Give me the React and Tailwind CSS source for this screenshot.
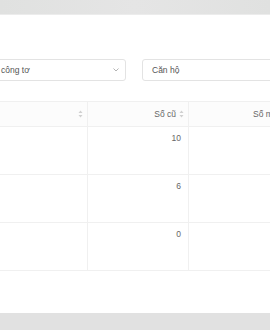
import React from "react";

function Sorter() {
  return (
    <svg width="5" height="8" viewBox="0 0 5 8" className="shrink-0">
      <path d="M2.5 0.5 L4.5 3 L0.5 3 Z" fill="#d0d0d0" />
      <path d="M2.5 7.5 L4.5 5 L0.5 5 Z" fill="#d0d0d0" />
    </svg>
  );
}

function Row({ value }) {
  return (
    <div className="flex h-[48px] border-b border-[#f0f0f0]">
      <div className="w-[128px] shrink-0 border-r border-[#f0f0f0]" />
      <div className="w-[101px] shrink-0 border-r border-[#f0f0f0] flex justify-end pr-[7px] pt-[5px] text-[8.5px] text-[#666]">
        {value}
      </div>
      <div className="flex-1" />
    </div>
  );
}

export default function App() {
  return (
    <div
      className="w-[270px] h-[330px] overflow-hidden bg-[#e1e1e1]"
      style={{ fontFamily: '"Liberation Sans", Arial, sans-serif' }}
    >
      <div className="h-[15px] bg-[linear-gradient(90deg,#e0e1e0_0%,#e5e5e5_50%,#e0e1e0_100%)] border-b border-[#ececec]" />
      <div className="h-[298px] bg-white pt-[44px] overflow-hidden">
        <div className="flex gap-[16px] ml-[-40px]">
          <div className="w-[166px] h-[22px] shrink-0 rounded-[3px] border border-[#e3e3e3] flex items-center pl-[40px] pr-[6px] text-[8.5px] text-[#555]">
            <span className="flex-1">công tơ</span>
            <svg width="6" height="4" viewBox="0 0 6 4">
              <path d="M0.5 0.5 L3 3 L5.5 0.5" fill="none" stroke="#aaa" strokeWidth="0.9" />
            </svg>
          </div>
          <div className="w-[200px] h-[22px] shrink-0 rounded-[3px] border border-[#e3e3e3] flex items-center pl-[9px] text-[8.5px] text-[#555]">
            Căn hộ
          </div>
        </div>
        <div className="mt-[20px] ml-[-40px] w-[400px] border-t border-[#f0f0f0]">
          <div className="flex h-[25px] bg-[#fcfcfc] border-b border-[#f0f0f0] text-[8.5px] text-[#666] font-medium">
            <div className="w-[128px] shrink-0 border-r border-[#f0f0f0] flex items-center justify-end pr-[4px]">
              <Sorter />
            </div>
            <div className="w-[101px] shrink-0 border-r border-[#f0f0f0] flex items-center justify-end gap-[3px] pr-[4px]">
              <span>Số cũ</span>
              <Sorter />
            </div>
            <div className="flex-1 flex items-center pl-[64px]">Số mới</div>
          </div>
          <Row value="10" />
          <Row value="6" />
          <Row value="0" />
        </div>
      </div>
    </div>
  );
}
